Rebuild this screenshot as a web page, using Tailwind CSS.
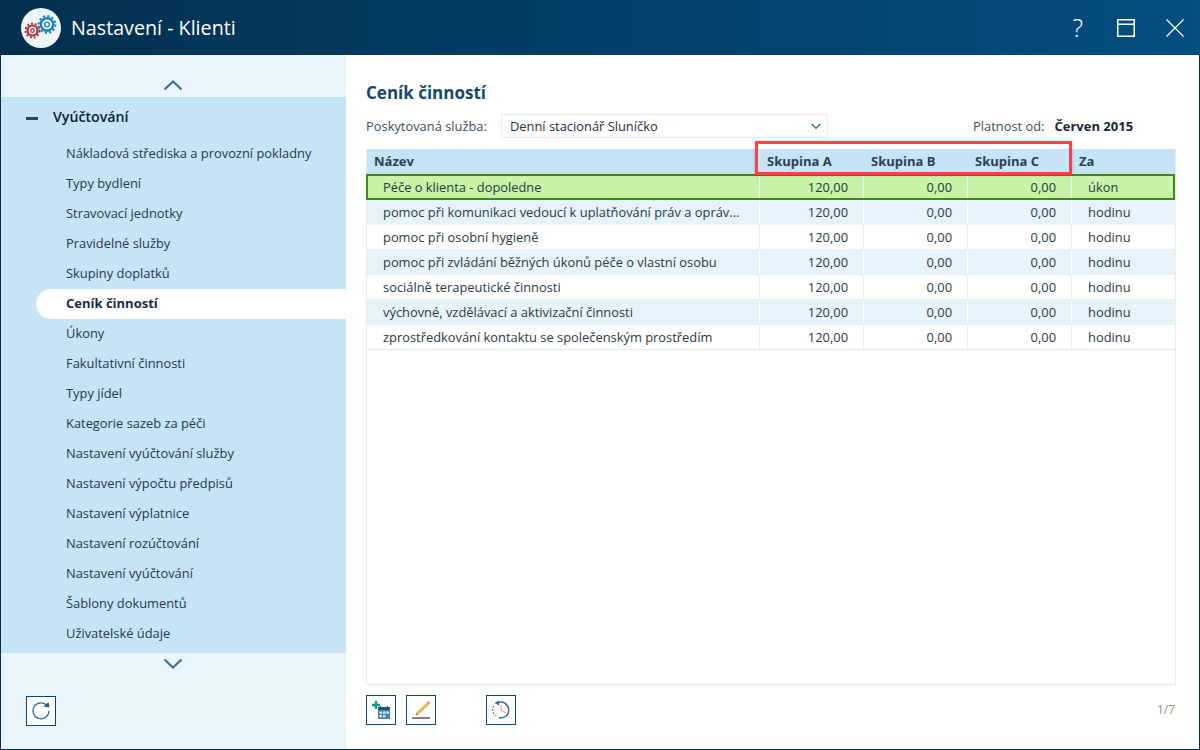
<!DOCTYPE html>
<html lang="cs">
<head>
  <meta charset="UTF-8">
  <title>Nastavení - Klienti</title>
  <script src="https://cdn.jsdelivr.net/npm/@tailwindcss/browser@4"></script>
</head>
<body class="m-0 overflow-hidden bg-white font-['Open_Sans',sans-serif]">
<div class="flex h-[750px] w-[1200px] flex-col">
  <!-- Titlebar -->
  <header class="flex h-[55px] shrink-0 items-center bg-gradient-to-r from-[#03304f] to-[#044e80] text-white">
    <div class="ml-[21px] flex h-[40px] w-[40px] items-center justify-center rounded-full bg-[#ecf5fa]">
      <svg width="36" height="28" viewBox="0 0 36 28" fill="none">
        <g stroke="#a9303e">
          <circle cx="9.5" cy="16.5" r="5" stroke-width="2.2"/>
          <circle cx="9.5" cy="16.5" r="7" stroke-width="2" stroke-dasharray="2 1.9"/>
          <circle cx="9.5" cy="16.5" r="1.8" stroke-width="1.2"/>
        </g>
        <g stroke="#1c7fc0">
          <circle cx="24" cy="10.5" r="6.2" stroke-width="2.4"/>
          <circle cx="24" cy="10.5" r="8.4" stroke-width="2" stroke-dasharray="2.2 2.2"/>
          <circle cx="24" cy="10.5" r="2.4" stroke-width="1.3"/>
        </g>
      </svg>
    </div>
    <h1 class="ml-[10px] text-[19.7px] font-normal leading-none">Nastavení - Klienti</h1>
    <div class="ml-auto flex items-center">
      <span class="mr-[34px] text-[25px] font-light leading-none">?</span>
      <svg class="mr-[31px]" width="18" height="18" viewBox="0 0 18 18" fill="none" stroke="white" stroke-width="1.5">
        <rect x=".75" y=".75" width="16.5" height="16.5"/><path d="M1 5.25h16"/>
      </svg>
      <svg class="mr-[16px]" width="18" height="18" viewBox="0 0 18 18" fill="none" stroke="white" stroke-width="1.2">
        <path d="M.5.5l17 17M17.5.5l-17 17"/>
      </svg>
    </div>
  </header>

  <div class="flex min-h-0 flex-1 border-x border-b border-[#04304f]">
    <!-- Sidebar -->
    <aside class="flex w-[345px] shrink-0 flex-col bg-[#e9f5fb]">
      <div class="flex h-[42px] items-end justify-center pb-[6px]">
        <svg class="mr-[1px]" width="20" height="12" viewBox="0 0 20 12" fill="none" stroke="#3f6f9c" stroke-width="2.2"><path d="M1.5 10.5L10 2.5l8.5 8"/></svg>
      </div>
      <nav class="h-[556px] bg-[#c5e4f5] text-[12.88px] text-[#243a4e]">
        <div class="flex h-[42px] items-center pl-[25px]">
          <span class="h-[3px] w-[12px] bg-[#1c4a78]"></span>
          <span class="mb-[2px] ml-[15px] text-[14.2px] font-semibold text-[#0c2238]">Vyúčtování</span>
        </div>
        <ul class="pl-[35px]">
          <li class="flex h-[30px] items-center pl-[30px]">Nákladová střediska a provozní pokladny</li>
          <li class="flex h-[30px] items-center pl-[30px]">Typy bydlení</li>
          <li class="flex h-[30px] items-center pl-[30px]">Stravovací jednotky</li>
          <li class="flex h-[30px] items-center pl-[30px]">Pravidelné služby</li>
          <li class="flex h-[30px] items-center pl-[30px]">Skupiny doplatků</li>
          <li class="flex h-[30px] items-center rounded-l-full bg-white pl-[30px] text-[13px] font-bold text-[#1a2c3e]">Ceník činností</li>
          <li class="flex h-[30px] items-center pl-[30px]">Úkony</li>
          <li class="flex h-[30px] items-center pl-[30px]">Fakultativní činnosti</li>
          <li class="flex h-[30px] items-center pl-[30px]">Typy jídel</li>
          <li class="flex h-[30px] items-center pl-[30px]">Kategorie sazeb za péči</li>
          <li class="flex h-[30px] items-center pl-[30px]">Nastavení vyúčtování služby</li>
          <li class="flex h-[30px] items-center pl-[30px]">Nastavení výpočtu předpisů</li>
          <li class="flex h-[30px] items-center pl-[30px]">Nastavení výplatnice</li>
          <li class="flex h-[30px] items-center pl-[30px]">Nastavení rozúčtování</li>
          <li class="flex h-[30px] items-center pl-[30px]">Nastavení vyúčtování</li>
          <li class="flex h-[30px] items-center pl-[30px]">Šablony dokumentů</li>
          <li class="flex h-[30px] items-center pl-[30px]">Uživatelské údaje</li>
        </ul>
      </nav>
      <div class="flex h-[22px] items-center justify-center">
        <svg class="mr-[1px]" width="20" height="12" viewBox="0 0 20 12" fill="none" stroke="#3f6f9c" stroke-width="2.2"><path d="M1.5 1.5L10 9.5l8.5-8"/></svg>
      </div>
      <div class="pl-[25px] pt-[21px]">
        <button class="flex h-[30px] w-[30px] items-center justify-center border border-[#064a78] bg-white">
          <svg width="28" height="28" viewBox="0 0 28 28" fill="none">
            <path d="M20 8.5A8 8 0 1 0 22 14" stroke="#2f6f9e" stroke-width="1.2"/>
            <path d="M16.5 9.5L22.5 10.5 21.5 5z" fill="#1f5f8e"/>
          </svg>
        </button>
      </div>
    </aside>

    <!-- Main -->
    <main class="relative flex min-w-0 flex-1 flex-col pl-[20px] pr-[23px] text-[12.88px] text-[#243a4e]">
      <h2 class="mt-[26px] text-[17px] font-bold leading-[23px] text-[#17476f]">Ceník činností</h2>
      <div class="mt-[10px] flex h-[24px] items-center">
        <span class="w-[135px] pt-[2px] text-[#3d4d5c]">Poskytovaná služba:</span>
        <div class="flex h-[24px] w-[327px] items-center justify-between border border-[#e6eef5] pl-[8px] pr-[6px] text-[#1f2f3f]">
          <span class="pt-[2px]">Denní stacionář Sluníčko</span>
          <svg width="10" height="7" viewBox="0 0 10 7" fill="none" stroke="#3f6f9c" stroke-width="1.4"><path d="M.7 1l4.3 4.2L9.3 1"/></svg>
        </div>
        <span class="ml-[145px] pt-[2px] text-[#3d4d5c]">Platnost od:</span>
        <span class="ml-[10px] pt-[2px] text-[13px] font-bold text-[#1a2736]">Červen 2015</span>
      </div>

      <!-- Table -->
      <div class="mt-[11px] flex h-[536px] flex-col border border-t-0 border-[#e8ecf8] text-[#2b3a48]">
        <div class="grid h-[25px] shrink-0 grid-cols-[392px_104px_104px_104px_1fr] items-center bg-[#c5e4f5] text-[13px] font-bold text-[#2c4058]">
          <span class="pl-[7px]">Název</span>
          <span class="pl-[8px]">Skupina A</span>
          <span class="pl-[8px]">Skupina B</span>
          <span class="pl-[8px]">Skupina C</span>
          <span class="pl-[8px]">Za</span>
        </div>
        <div class="-ml-px grid h-[26px] shrink-0 grid-cols-[391px_104px_104px_104px_1fr] items-stretch border-2 border-[#3f8a10] bg-[#c8f2a6] leading-[22px]">
          <span class="pl-[15px]">Péče o klienta - dopoledne</span>
          <span class="border-l border-white/70 pr-[15px] text-right">120,00</span>
          <span class="border-l border-white/70 pr-[15px] text-right">0,00</span>
          <span class="border-l border-white/70 pr-[15px] text-right">0,00</span>
          <span class="border-l border-white/70 pl-[16px]">úkon</span>
        </div>
        <div class="grid h-[25px] shrink-0 grid-cols-[392px_104px_104px_104px_1fr] items-stretch border-b border-[#eaf2f8] bg-[#e6f3fa] leading-[24px]">
          <span class="pl-[16px]">pomoc při komunikaci vedoucí k uplatňování práv a opráv...</span>
          <span class="border-l border-white pr-[15px] text-right">120,00</span>
          <span class="border-l border-white pr-[15px] text-right">0,00</span>
          <span class="border-l border-white pr-[15px] text-right">0,00</span>
          <span class="border-l border-white pl-[16px]">hodinu</span>
        </div>
        <div class="grid h-[25px] shrink-0 grid-cols-[392px_104px_104px_104px_1fr] items-stretch border-b border-[#eaf2f8] bg-white leading-[24px]">
          <span class="pl-[16px]">pomoc při osobní hygieně</span>
          <span class="border-l border-[#e8f0f6] pr-[15px] text-right">120,00</span>
          <span class="border-l border-[#e8f0f6] pr-[15px] text-right">0,00</span>
          <span class="border-l border-[#e8f0f6] pr-[15px] text-right">0,00</span>
          <span class="border-l border-[#e8f0f6] pl-[16px]">hodinu</span>
        </div>
        <div class="grid h-[25px] shrink-0 grid-cols-[392px_104px_104px_104px_1fr] items-stretch border-b border-[#eaf2f8] bg-[#e6f3fa] leading-[24px]">
          <span class="pl-[16px]">pomoc při zvládání běžných úkonů péče o vlastní osobu</span>
          <span class="border-l border-white pr-[15px] text-right">120,00</span>
          <span class="border-l border-white pr-[15px] text-right">0,00</span>
          <span class="border-l border-white pr-[15px] text-right">0,00</span>
          <span class="border-l border-white pl-[16px]">hodinu</span>
        </div>
        <div class="grid h-[25px] shrink-0 grid-cols-[392px_104px_104px_104px_1fr] items-stretch border-b border-[#eaf2f8] bg-white leading-[24px]">
          <span class="pl-[16px]">sociálně terapeutické činnosti</span>
          <span class="border-l border-[#e8f0f6] pr-[15px] text-right">120,00</span>
          <span class="border-l border-[#e8f0f6] pr-[15px] text-right">0,00</span>
          <span class="border-l border-[#e8f0f6] pr-[15px] text-right">0,00</span>
          <span class="border-l border-[#e8f0f6] pl-[16px]">hodinu</span>
        </div>
        <div class="grid h-[25px] shrink-0 grid-cols-[392px_104px_104px_104px_1fr] items-stretch border-b border-[#eaf2f8] bg-[#e6f3fa] leading-[24px]">
          <span class="pl-[16px]">výchovné, vzdělávací a aktivizační činnosti</span>
          <span class="border-l border-white pr-[15px] text-right">120,00</span>
          <span class="border-l border-white pr-[15px] text-right">0,00</span>
          <span class="border-l border-white pr-[15px] text-right">0,00</span>
          <span class="border-l border-white pl-[16px]">hodinu</span>
        </div>
        <div class="grid h-[25px] shrink-0 grid-cols-[392px_104px_104px_104px_1fr] items-stretch border-b border-[#e4ebf2] bg-white leading-[24px]">
          <span class="pl-[16px]">zprostředkování kontaktu se společenským prostředím</span>
          <span class="border-l border-[#e8f0f6] pr-[15px] text-right">120,00</span>
          <span class="border-l border-[#e8f0f6] pr-[15px] text-right">0,00</span>
          <span class="border-l border-[#e8f0f6] pr-[15px] text-right">0,00</span>
          <span class="border-l border-[#e8f0f6] pl-[16px]">hodinu</span>
        </div>
      </div>

      <!-- Toolbar -->
      <div class="mt-[10px] flex items-center">
        <button class="flex h-[30px] w-[30px] items-center justify-center border border-[#064a78] bg-white">
          <svg width="28" height="28" viewBox="0 0 28 28" fill="none">
            <path d="M9 5v8M5 9h8" stroke="#0d9d86" stroke-width="2.4"/>
            <rect x="11" y="11" width="12" height="12" fill="#4a82aa"/>
            <rect x="11" y="11" width="12" height="3" fill="#1e5580"/>
            <path d="M13.5 10v2M20.5 10v2" stroke="#1e5580"/>
            <path d="M12.5 15.5h2.4v2.2h-2.4zM16 15.5h2.4v2.2H16zM19.5 15.5h2.4v2.2h-2.4zM12.5 19h2.4v2.2h-2.4zM16 19h2.4v2.2H16z" fill="#e4eff6"/>
          </svg>
        </button>
        <button class="ml-[10px] flex h-[30px] w-[30px] items-center justify-center border border-[#064a78] bg-white">
          <svg width="28" height="28" viewBox="0 0 28 28" fill="none">
            <path d="M10.5 17.5L21 7.5" stroke="#f2b544" stroke-width="3"/>
            <path d="M20 6.2l2 2 1-1.2-1.8-1.8z" fill="#e26a6a"/>
            <path d="M9.2 16.4l2.2 2.2-2.8.8z" fill="#7a7a7a"/>
            <path d="M5 22h18" stroke="#8d7b93" stroke-width="2"/>
          </svg>
        </button>
        <button class="ml-[50px] flex h-[30px] w-[30px] items-center justify-center border border-[#064a78] bg-white">
          <svg width="28" height="28" viewBox="0 0 28 28" fill="none">
            <path d="M11 6.5A8 8 0 1 1 12 21.8" stroke="#2f6f9e" stroke-width="1.4"/>
            <path d="M6.6 10a8 8 0 0 0 2 9.8" stroke="#2f6f9e" stroke-width="1.4" stroke-dasharray="1.5 1.7"/>
            <path d="M12 4.5L7.5 7l4.5 2.5z" fill="#2f6f9e"/>
            <path d="M14 9v5l5 3" stroke="#f2a0a4" stroke-width="1.3"/>
          </svg>
        </button>
        <span class="ml-auto pr-[1px] text-[12px] text-[#b08a6a]">1/7</span>
      </div>

      <!-- Red highlight over the group columns -->
      <div class="pointer-events-none absolute left-[409px] top-[86px] h-[34px] w-[317px] border-[3px] border-[#f5444c] shadow-[0_0_3px_rgba(0,0,0,0.25)]"></div>
    </main>
  </div>
</div>
</body>
</html>
